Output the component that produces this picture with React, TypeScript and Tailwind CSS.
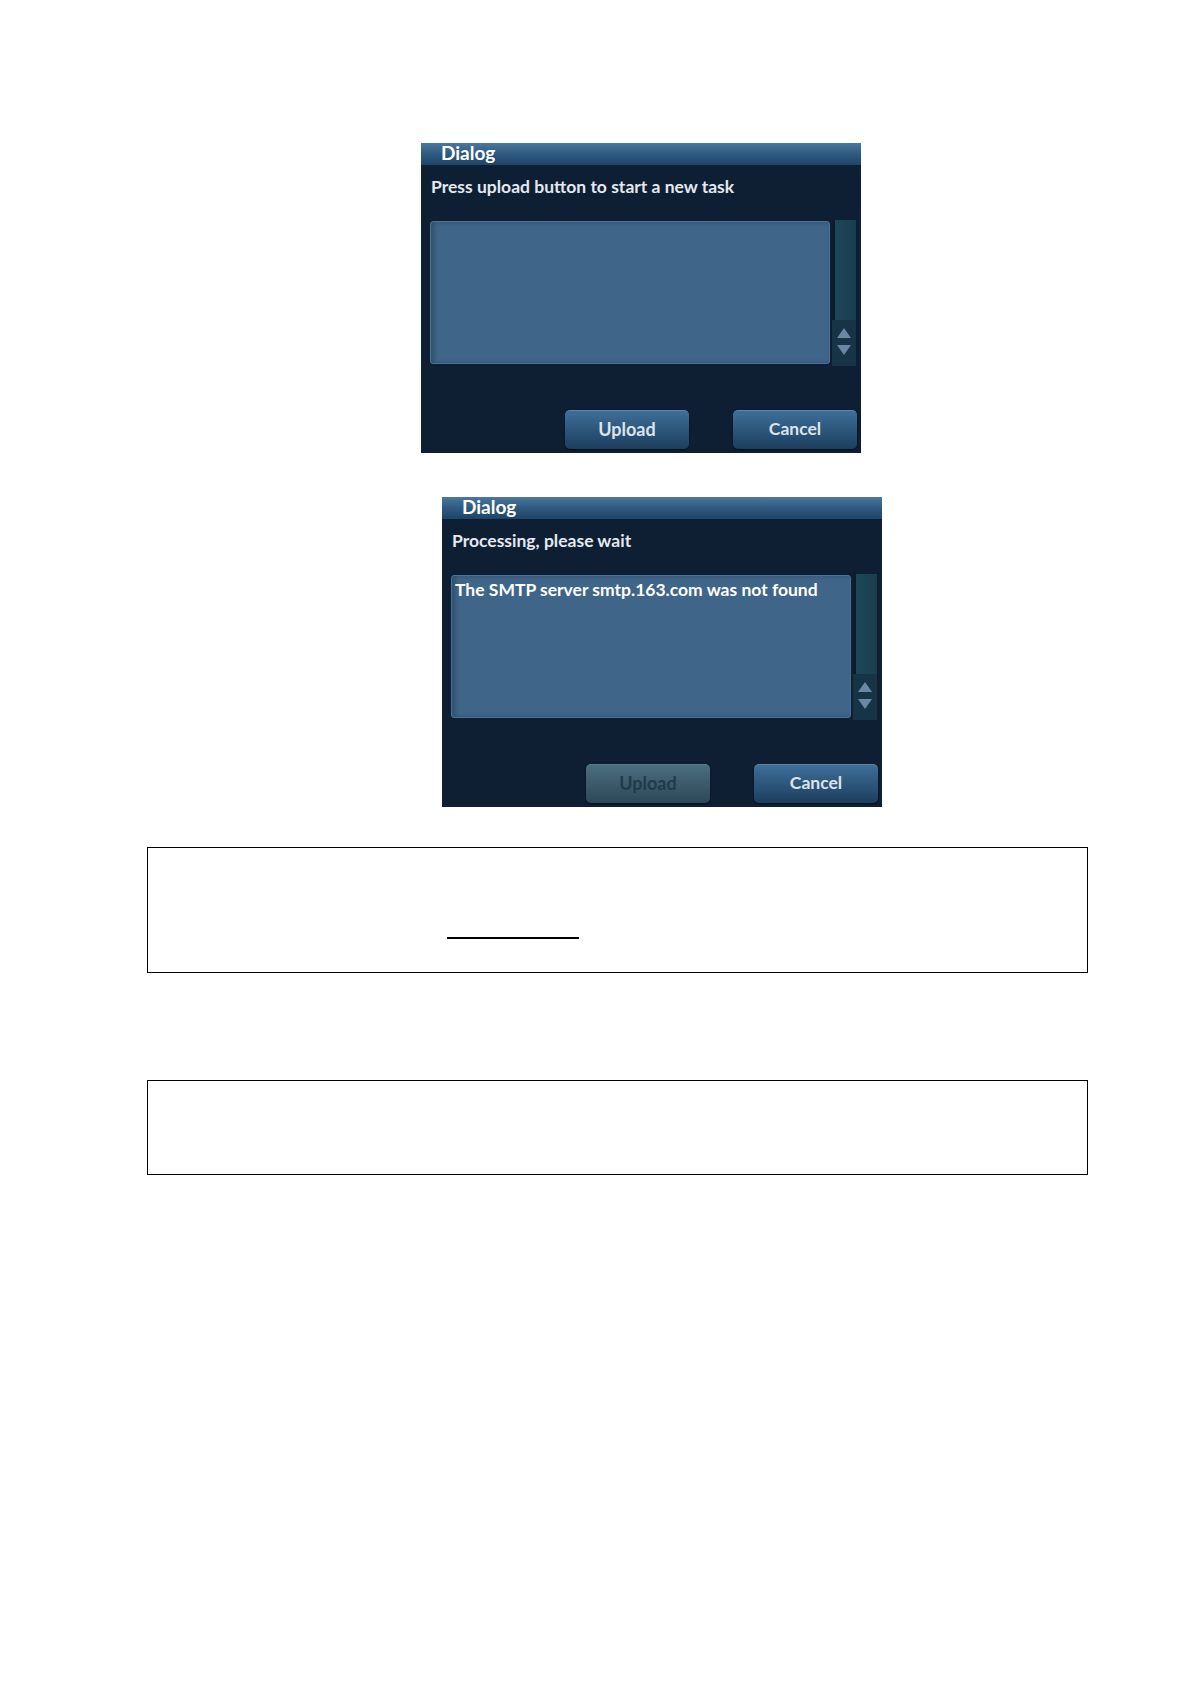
import React from 'react';

type DialogProps = {
  subtitle: string;
  message?: string;
  uploadDisabled?: boolean;
  className?: string;
};

function ScrollBar() {
  return (
    <div className="w-[24px] h-[146px] -mt-[1px] flex flex-col bg-[#173446]">
      <div className="flex-1 flex">
        <div className="w-[3px] bg-[#0c1c2a]" />
        <div className="flex-1 bg-linear-to-r from-[#1d4757] to-[#1a3d4e]" />
      </div>
      <div className="h-[46px] flex flex-col items-center justify-center gap-[5px] pb-[4px]">
        <svg width="16" height="12" viewBox="0 0 16 12">
          <path d="M8 1 L15 11 L1 11 Z" fill="#6a88a3" />
        </svg>
        <svg width="16" height="12" viewBox="0 0 16 12">
          <path d="M1 1 L15 1 L8 11 Z" fill="#6a88a3" />
        </svg>
      </div>
    </div>
  );
}

function DialogBox({ subtitle, message, uploadDisabled, className }: DialogProps) {
  return (
    <div
      className={`w-[440px] h-[310px] bg-[#0e1f33] flex flex-col text-[#e3e9ef] font-bold ${className ?? ''}`}
      style={{ fontFamily: 'Lato, "Open Sans", sans-serif' }}
    >
      <div className="h-[22px] bg-linear-to-b from-[#4a77a0] via-[#2f5a80] to-[#1f4468] pl-[20px]">
        <div className="text-[19px] leading-[19px] text-white">Dialog</div>
      </div>
      <div className="mt-[10px] pl-[10px] text-[17.5px] leading-[24px]">{subtitle}</div>
      <div className="mt-[22px] pl-[9px] flex gap-[2px]">
        <div className="w-[400px] h-[143px] rounded-[3px] bg-[#3f6588] border border-[#4b7195] shadow-[inset_3px_0_4px_rgba(20,40,60,0.35)] px-[3px] pt-[2px] text-[17.5px] leading-[24px] text-white">
          {message}
        </div>
        <ScrollBar />
      </div>
      <div className="mt-[44px] pl-[144px] flex gap-[44px]">
        <button
          className={`w-[124px] h-[39px] rounded-[5px] text-[18px] leading-[34px] pb-[3px] shadow-[0_1px_2px_rgba(0,0,0,0.6)] ${
            uploadDisabled
              ? 'bg-linear-to-b from-[#4b6e7e] to-[#2c4858] text-[#213a4b] border-t border-[#5b7c8b]'
              : 'bg-linear-to-b from-[#3f6f99] to-[#1c3e5e] text-[#dbe4ec] border-t border-[#5a86ad]'
          }`}
        >
          Upload
        </button>
        <button className="w-[124px] h-[39px] rounded-[5px] text-[17.5px] leading-[34px] pb-[3px] shadow-[0_1px_2px_rgba(0,0,0,0.6)] bg-linear-to-b from-[#3f6f99] to-[#1c3e5e] text-[#dbe4ec] border-t border-[#5a86ad]">
          Cancel
        </button>
      </div>
    </div>
  );
}

export default function App() {
  return (
    <div className="w-[1190px] min-h-[1684px] bg-white flex flex-col">
      <DialogBox className="mt-[143px] ml-[421px]" subtitle="Press upload button to start a new task" />
      <DialogBox
        className="mt-[44px] ml-[442px]"
        subtitle="Processing, please wait"
        message="The SMTP server smtp.163.com was not found"
        uploadDisabled
      />

      {/* blank note boxes */}
      <div className="mt-[40px] ml-[147px] w-[941px] h-[126px] border border-black pt-[89px] pl-[299px]">
        <div className="w-[132px] h-[2px] bg-black" />
      </div>
      <div className="mt-[107px] ml-[147px] w-[941px] h-[95px] border border-black" />
    </div>
  );
}
